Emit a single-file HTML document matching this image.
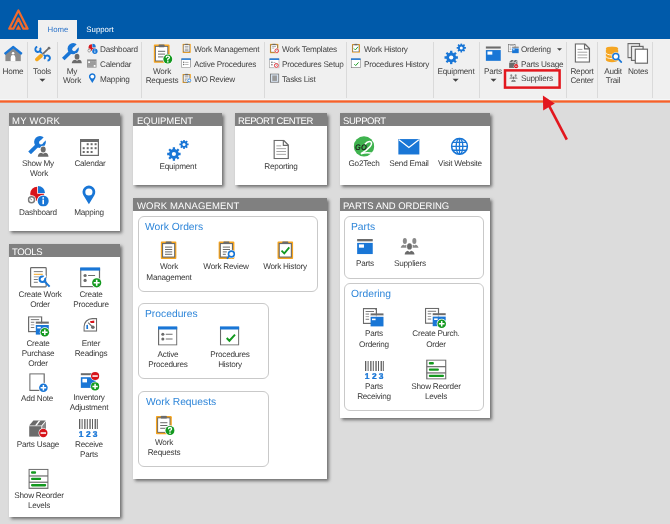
<!DOCTYPE html><html><head><meta charset="utf-8"><title>Go2Tech Home</title><style>
*{box-sizing:border-box}
html,body{margin:0;padding:0}
body{width:670px;height:524px;overflow:hidden;position:relative;background:#DCDCDC;font-family:"Liberation Sans",sans-serif;text-rendering:geometricPrecision}
.t{position:absolute;white-space:nowrap;line-height:10px;font-family:"Liberation Sans",sans-serif;will-change:transform}
.pn{position:absolute;background:#fff;box-shadow:2px 2px 3px rgba(0,0,0,0.5)}
.ph{position:absolute;left:0;top:0;right:0;height:13px;background:#808080}
.gb{position:absolute;border:1px solid #C9C9C9;border-radius:6px;background:#fff}
</style></head><body>
<div style="position:absolute;left:0;top:0;width:670px;height:39px;background:#005AAA"></div>
<div style="position:absolute;left:38px;top:20px;width:39px;height:19px;background:#F0F0F0"></div>
<div class="t" style="left:-2.2px;top:25px;width:120px;text-align:center;font-size:7.8px;line-height:10px;color:#2A72C8;">Home</div>
<div class="t" style="left:40.2px;top:25px;width:120px;text-align:center;font-size:7.8px;line-height:10px;color:#FFFFFF;">Support</div>
<div style="position:absolute;left:0;top:39px;width:670px;height:61px;background:#F0F0F0"></div>
<div style="position:absolute;left:27px;top:42px;width:1px;height:56px;background:#DADADA"></div>
<div style="position:absolute;left:57px;top:42px;width:1px;height:56px;background:#DADADA"></div>
<div style="position:absolute;left:141px;top:42px;width:1px;height:56px;background:#DADADA"></div>
<div style="position:absolute;left:264px;top:42px;width:1px;height:56px;background:#DADADA"></div>
<div style="position:absolute;left:346px;top:42px;width:1px;height:56px;background:#DADADA"></div>
<div style="position:absolute;left:433px;top:42px;width:1px;height:56px;background:#DADADA"></div>
<div style="position:absolute;left:479px;top:42px;width:1px;height:56px;background:#DADADA"></div>
<div style="position:absolute;left:566px;top:42px;width:1px;height:56px;background:#DADADA"></div>
<div style="position:absolute;left:597px;top:42px;width:1px;height:56px;background:#DADADA"></div>
<div style="position:absolute;left:652px;top:42px;width:1px;height:56px;background:#DADADA"></div>
<div style="position:absolute;left:0;top:99px;width:670px;height:1px;background:#F6F8F9"></div>
<div style="position:absolute;left:0;top:100px;width:670px;height:1px;background:#F4906A"></div>
<div style="position:absolute;left:0;top:101px;width:670px;height:1px;background:#F6602A"></div>
<div style="position:absolute;left:0;top:102px;width:670px;height:1px;background:#EE8A64"></div>
<div style="position:absolute;left:0;top:103px;width:670px;height:1px;background:#D6DDE0"></div>
<div class="t" style="left:-46.8px;top:67px;width:120px;text-align:center;font-size:8.2px;line-height:10px;color:#444;letter-spacing:-0.25px;">Home</div>
<div class="t" style="left:-17.6px;top:67px;width:120px;text-align:center;font-size:8.2px;line-height:10px;color:#444;letter-spacing:-0.25px;">Tools</div>
<div class="t" style="left:12.2px;top:67px;width:120px;text-align:center;font-size:8.2px;line-height:10px;color:#444;letter-spacing:-0.25px;">My</div>
<div class="t" style="left:12.1px;top:76px;width:120px;text-align:center;font-size:8.2px;line-height:10px;color:#444;letter-spacing:-0.25px;">Work</div>
<div class="t" style="left:101.5px;top:67px;width:120px;text-align:center;font-size:8.2px;line-height:10px;color:#444;letter-spacing:-0.25px;">Work</div>
<div class="t" style="left:101.5px;top:76px;width:120px;text-align:center;font-size:8.2px;line-height:10px;color:#444;letter-spacing:-0.25px;">Requests</div>
<div class="t" style="left:396.0px;top:67px;width:120px;text-align:center;font-size:8.2px;line-height:10px;color:#444;letter-spacing:-0.25px;">Equipment</div>
<div class="t" style="left:433.2px;top:67px;width:120px;text-align:center;font-size:8.2px;line-height:10px;color:#444;letter-spacing:-0.25px;">Parts</div>
<div class="t" style="left:522.2px;top:67px;width:120px;text-align:center;font-size:8.2px;line-height:10px;color:#444;letter-spacing:-0.25px;">Report</div>
<div class="t" style="left:522.2px;top:76px;width:120px;text-align:center;font-size:8.2px;line-height:10px;color:#444;letter-spacing:-0.25px;">Center</div>
<div class="t" style="left:552.8px;top:67px;width:120px;text-align:center;font-size:8.2px;line-height:10px;color:#444;letter-spacing:-0.25px;">Audit</div>
<div class="t" style="left:553.0px;top:76px;width:120px;text-align:center;font-size:8.2px;line-height:10px;color:#444;letter-spacing:-0.25px;">Trail</div>
<div class="t" style="left:577.7px;top:67px;width:120px;text-align:center;font-size:8.2px;line-height:10px;color:#444;letter-spacing:-0.25px;">Notes</div>
<div class="t" style="left:99.9px;top:45px;font-size:8.2px;line-height:10px;color:#444;letter-spacing:-0.25px;">Dashboard</div>
<div class="t" style="left:99.8px;top:60px;font-size:8.2px;line-height:10px;color:#444;letter-spacing:-0.25px;">Calendar</div>
<div class="t" style="left:100.0px;top:75px;font-size:8.2px;line-height:10px;color:#444;letter-spacing:-0.25px;">Mapping</div>
<div class="t" style="left:194.1px;top:45px;font-size:8.2px;line-height:10px;color:#444;letter-spacing:-0.25px;">Work Management</div>
<div class="t" style="left:194.0px;top:60px;font-size:8.2px;line-height:10px;color:#444;letter-spacing:-0.25px;">Active Procedures</div>
<div class="t" style="left:194.0px;top:75px;font-size:8.2px;line-height:10px;color:#444;letter-spacing:-0.25px;">WO Review</div>
<div class="t" style="left:281.5px;top:45px;font-size:8.2px;line-height:10px;color:#444;letter-spacing:-0.25px;">Work Templates</div>
<div class="t" style="left:281.5px;top:60px;font-size:8.2px;line-height:10px;color:#444;letter-spacing:-0.25px;">Procedures Setup</div>
<div class="t" style="left:281.5px;top:75px;font-size:8.2px;line-height:10px;color:#444;letter-spacing:-0.25px;">Tasks List</div>
<div class="t" style="left:363.5px;top:45px;font-size:8.2px;line-height:10px;color:#444;letter-spacing:-0.25px;">Work History</div>
<div class="t" style="left:363.5px;top:60px;font-size:8.2px;line-height:10px;color:#444;letter-spacing:-0.25px;">Procedures History</div>
<div class="t" style="left:520.9px;top:45px;font-size:8.2px;line-height:10px;color:#444;letter-spacing:-0.25px;">Ordering</div>
<div class="t" style="left:521.0px;top:60px;font-size:8.2px;line-height:10px;color:#444;letter-spacing:-0.25px;">Parts Usage</div>
<div class="t" style="left:520.9px;top:74px;font-size:8.2px;line-height:10px;color:#444;letter-spacing:-0.25px;">Suppliers</div>
<div class="pn" style="left:9px;top:113px;width:111px;height:118px"><div class="ph"></div></div>
<div class="t" style="left:12.3px;top:116px;font-size:9.5px;line-height:12px;color:#FFFFFF;letter-spacing:0.27px;">MY WORK</div>
<div class="pn" style="left:9px;top:244px;width:111px;height:273px"><div class="ph"></div></div>
<div class="t" style="left:12.3px;top:247px;font-size:9.5px;line-height:12px;color:#FFFFFF;letter-spacing:-0.38px;">TOOLS</div>
<div class="pn" style="left:133px;top:113px;width:89px;height:72px"><div class="ph"></div></div>
<div class="t" style="left:137.3px;top:116px;font-size:9.5px;line-height:12px;color:#FFFFFF;letter-spacing:-0.05px;">EQUIPMENT</div>
<div class="pn" style="left:235px;top:113px;width:92px;height:72px"><div class="ph"></div></div>
<div class="t" style="left:238.3px;top:116px;font-size:9.5px;line-height:12px;color:#FFFFFF;letter-spacing:-0.47px;">REPORT CENTER</div>
<div class="pn" style="left:340px;top:113px;width:150px;height:72px"><div class="ph"></div></div>
<div class="t" style="left:343.3px;top:116px;font-size:9.5px;line-height:12px;color:#FFFFFF;letter-spacing:-0.45px;">SUPPORT</div>
<div class="pn" style="left:133px;top:198px;width:194px;height:281px"><div class="ph"></div></div>
<div class="t" style="left:137.3px;top:201px;font-size:9.5px;line-height:12px;color:#FFFFFF;letter-spacing:0.15px;">WORK MANAGEMENT</div>
<div class="pn" style="left:340px;top:198px;width:150px;height:220px"><div class="ph"></div></div>
<div class="t" style="left:343.3px;top:201px;font-size:9.5px;line-height:12px;color:#FFFFFF;letter-spacing:-0.035px;">PARTS AND ORDERING</div>
<div class="gb" style="left:138px;top:216px;width:180px;height:76px"></div>
<div class="gb" style="left:138px;top:303px;width:131px;height:76px"></div>
<div class="gb" style="left:138px;top:391px;width:131px;height:76px"></div>
<div class="gb" style="left:344px;top:216px;width:140px;height:63px"></div>
<div class="gb" style="left:344px;top:283px;width:140px;height:128px"></div>
<div class="t" style="left:145.4px;top:222px;font-size:10.3px;line-height:12px;color:#2F86D9;">Work Orders</div>
<div class="t" style="left:144.8px;top:309px;font-size:10.3px;line-height:12px;color:#2F86D9;">Procedures</div>
<div class="t" style="left:145.5px;top:397px;font-size:10.3px;line-height:12px;color:#2F86D9;">Work Requests</div>
<div class="t" style="left:351.3px;top:222px;font-size:10.3px;line-height:12px;color:#2F86D9;">Parts</div>
<div class="t" style="left:351.2px;top:289px;font-size:10.3px;line-height:12px;color:#2F86D9;">Ordering</div>
<div class="t" style="left:-22.0px;top:159px;width:120px;text-align:center;font-size:8.2px;line-height:10px;color:#3A3A3A;letter-spacing:-0.25px;">Show My</div>
<div class="t" style="left:-21.5px;top:169px;width:120px;text-align:center;font-size:8.2px;line-height:10px;color:#3A3A3A;letter-spacing:-0.25px;">Work</div>
<div class="t" style="left:30.0px;top:159px;width:120px;text-align:center;font-size:8.2px;line-height:10px;color:#3A3A3A;letter-spacing:-0.25px;">Calendar</div>
<div class="t" style="left:-22.0px;top:208px;width:120px;text-align:center;font-size:8.2px;line-height:10px;color:#3A3A3A;letter-spacing:-0.25px;">Dashboard</div>
<div class="t" style="left:28.9px;top:208px;width:120px;text-align:center;font-size:8.2px;line-height:10px;color:#3A3A3A;letter-spacing:-0.25px;">Mapping</div>
<div class="t" style="left:-19.6px;top:290px;width:120px;text-align:center;font-size:8.2px;line-height:10px;color:#3A3A3A;letter-spacing:-0.25px;">Create Work</div>
<div class="t" style="left:-19.6px;top:300px;width:120px;text-align:center;font-size:8.2px;line-height:10px;color:#3A3A3A;letter-spacing:-0.25px;">Order</div>
<div class="t" style="left:30.9px;top:290px;width:120px;text-align:center;font-size:8.2px;line-height:10px;color:#3A3A3A;letter-spacing:-0.25px;">Create</div>
<div class="t" style="left:30.9px;top:300px;width:120px;text-align:center;font-size:8.2px;line-height:10px;color:#3A3A3A;letter-spacing:-0.25px;">Procedure</div>
<div class="t" style="left:-22.0px;top:339px;width:120px;text-align:center;font-size:8.2px;line-height:10px;color:#3A3A3A;letter-spacing:-0.25px;">Create</div>
<div class="t" style="left:-22.0px;top:349px;width:120px;text-align:center;font-size:8.2px;line-height:10px;color:#3A3A3A;letter-spacing:-0.25px;">Purchase</div>
<div class="t" style="left:-22.0px;top:359px;width:120px;text-align:center;font-size:8.2px;line-height:10px;color:#3A3A3A;letter-spacing:-0.25px;">Order</div>
<div class="t" style="left:30.8px;top:339px;width:120px;text-align:center;font-size:8.2px;line-height:10px;color:#3A3A3A;letter-spacing:-0.25px;">Enter</div>
<div class="t" style="left:30.8px;top:349px;width:120px;text-align:center;font-size:8.2px;line-height:10px;color:#3A3A3A;letter-spacing:-0.25px;">Readings</div>
<div class="t" style="left:-22.6px;top:394px;width:120px;text-align:center;font-size:8.2px;line-height:10px;color:#3A3A3A;letter-spacing:-0.25px;">Add Note</div>
<div class="t" style="left:28.6px;top:393px;width:120px;text-align:center;font-size:8.2px;line-height:10px;color:#3A3A3A;letter-spacing:-0.25px;">Inventory</div>
<div class="t" style="left:28.6px;top:403px;width:120px;text-align:center;font-size:8.2px;line-height:10px;color:#3A3A3A;letter-spacing:-0.25px;">Adjustment</div>
<div class="t" style="left:-22.0px;top:440px;width:120px;text-align:center;font-size:8.2px;line-height:10px;color:#3A3A3A;letter-spacing:-0.25px;">Parts Usage</div>
<div class="t" style="left:28.5px;top:440px;width:120px;text-align:center;font-size:8.2px;line-height:10px;color:#3A3A3A;letter-spacing:-0.25px;">Receive</div>
<div class="t" style="left:28.5px;top:450px;width:120px;text-align:center;font-size:8.2px;line-height:10px;color:#3A3A3A;letter-spacing:-0.25px;">Parts</div>
<div class="t" style="left:-21.5px;top:491px;width:120px;text-align:center;font-size:8.2px;line-height:10px;color:#3A3A3A;letter-spacing:-0.25px;">Show Reorder</div>
<div class="t" style="left:-21.5px;top:501px;width:120px;text-align:center;font-size:8.2px;line-height:10px;color:#3A3A3A;letter-spacing:-0.25px;">Levels</div>
<div class="t" style="left:118.4px;top:162px;width:120px;text-align:center;font-size:8.2px;line-height:10px;color:#3A3A3A;letter-spacing:-0.25px;">Equipment</div>
<div class="t" style="left:221.3px;top:162px;width:120px;text-align:center;font-size:8.2px;line-height:10px;color:#3A3A3A;letter-spacing:-0.25px;">Reporting</div>
<div class="t" style="left:304.1px;top:159px;width:120px;text-align:center;font-size:8.2px;line-height:10px;color:#3A3A3A;letter-spacing:-0.25px;">Go2Tech</div>
<div class="t" style="left:348.7px;top:159px;width:120px;text-align:center;font-size:8.2px;line-height:10px;color:#3A3A3A;letter-spacing:-0.25px;">Send Email</div>
<div class="t" style="left:399.8px;top:159px;width:120px;text-align:center;font-size:8.2px;line-height:10px;color:#3A3A3A;letter-spacing:-0.25px;">Visit Website</div>
<div class="t" style="left:108.5px;top:262px;width:120px;text-align:center;font-size:8.2px;line-height:10px;color:#3A3A3A;letter-spacing:-0.25px;">Work</div>
<div class="t" style="left:108.5px;top:273px;width:120px;text-align:center;font-size:8.2px;line-height:10px;color:#3A3A3A;letter-spacing:-0.25px;">Management</div>
<div class="t" style="left:166.3px;top:262px;width:120px;text-align:center;font-size:8.2px;line-height:10px;color:#3A3A3A;letter-spacing:-0.25px;">Work Review</div>
<div class="t" style="left:225.3px;top:262px;width:120px;text-align:center;font-size:8.2px;line-height:10px;color:#3A3A3A;letter-spacing:-0.25px;">Work History</div>
<div class="t" style="left:107.6px;top:350px;width:120px;text-align:center;font-size:8.2px;line-height:10px;color:#3A3A3A;letter-spacing:-0.25px;">Active</div>
<div class="t" style="left:107.6px;top:360px;width:120px;text-align:center;font-size:8.2px;line-height:10px;color:#3A3A3A;letter-spacing:-0.25px;">Procedures</div>
<div class="t" style="left:169.9px;top:350px;width:120px;text-align:center;font-size:8.2px;line-height:10px;color:#3A3A3A;letter-spacing:-0.25px;">Procedures</div>
<div class="t" style="left:169.9px;top:360px;width:120px;text-align:center;font-size:8.2px;line-height:10px;color:#3A3A3A;letter-spacing:-0.25px;">History</div>
<div class="t" style="left:103.8px;top:438px;width:120px;text-align:center;font-size:8.2px;line-height:10px;color:#3A3A3A;letter-spacing:-0.25px;">Work</div>
<div class="t" style="left:103.8px;top:448px;width:120px;text-align:center;font-size:8.2px;line-height:10px;color:#3A3A3A;letter-spacing:-0.25px;">Requests</div>
<div class="t" style="left:305.1px;top:259px;width:120px;text-align:center;font-size:8.2px;line-height:10px;color:#3A3A3A;letter-spacing:-0.25px;">Parts</div>
<div class="t" style="left:349.9px;top:259px;width:120px;text-align:center;font-size:8.2px;line-height:10px;color:#3A3A3A;letter-spacing:-0.25px;">Suppliers</div>
<div class="t" style="left:313.6px;top:329px;width:120px;text-align:center;font-size:8.2px;line-height:10px;color:#3A3A3A;letter-spacing:-0.25px;">Parts</div>
<div class="t" style="left:313.6px;top:340px;width:120px;text-align:center;font-size:8.2px;line-height:10px;color:#3A3A3A;letter-spacing:-0.25px;">Ordering</div>
<div class="t" style="left:376.3px;top:329px;width:120px;text-align:center;font-size:8.2px;line-height:10px;color:#3A3A3A;letter-spacing:-0.25px;">Create Purch.</div>
<div class="t" style="left:376.3px;top:340px;width:120px;text-align:center;font-size:8.2px;line-height:10px;color:#3A3A3A;letter-spacing:-0.25px;">Order</div>
<div class="t" style="left:314.2px;top:382px;width:120px;text-align:center;font-size:8.2px;line-height:10px;color:#3A3A3A;letter-spacing:-0.25px;">Parts</div>
<div class="t" style="left:314.2px;top:392px;width:120px;text-align:center;font-size:8.2px;line-height:10px;color:#3A3A3A;letter-spacing:-0.25px;">Receiving</div>
<div class="t" style="left:376.4px;top:382px;width:120px;text-align:center;font-size:8.2px;line-height:10px;color:#3A3A3A;letter-spacing:-0.25px;">Show Reorder</div>
<div class="t" style="left:376.4px;top:392px;width:120px;text-align:center;font-size:8.2px;line-height:10px;color:#3A3A3A;letter-spacing:-0.25px;">Levels</div>
<svg style="position:absolute;left:0;top:0" width="670" height="524" viewBox="0 0 670 524"><defs>
<symbol id="clip" viewBox="0 0 16 18">
 <rect x="0" y="0.6" width="16" height="17.4" rx="1.2" fill="#F5A41F"/>
 <rect x="1.4" y="2" width="13.2" height="14.6" fill="#6B6B6B"/>
 <rect x="2.5" y="3.1" width="11" height="12.4" fill="#fff"/>
 <rect x="5" y="0.4" width="6" height="2.6" rx="0.6" fill="#6B6B6B"/>
 <rect x="4.4" y="5.6" width="7.2" height="1" fill="#6B6B6B"/>
 <rect x="4.4" y="8" width="7.2" height="1" fill="#6B6B6B"/>
 <rect x="4.4" y="10.4" width="7.2" height="1" fill="#6B6B6B"/>
 <rect x="4.4" y="12.8" width="7.2" height="1" fill="#6B6B6B"/>
</symbol>
<symbol id="clipcheck" viewBox="0 0 16 18">
 <rect x="0" y="0.6" width="16" height="17.4" rx="1.2" fill="#F5A41F"/>
 <rect x="1.4" y="2" width="13.2" height="14.6" fill="#6B6B6B"/>
 <rect x="2.5" y="3.1" width="11" height="12.4" fill="#fff"/>
 <rect x="5" y="0.4" width="6" height="2.6" rx="0.6" fill="#6B6B6B"/>
 <path d="M4.2 9.6 L7 12.4 L12 6.4" fill="none" stroke="#13991F" stroke-width="1.8"/>
</symbol>
<symbol id="clipreview" viewBox="0 0 18 19">
 <rect x="0" y="0.6" width="16" height="17.4" rx="1.2" fill="#F5A41F"/>
 <rect x="1.4" y="2" width="13.2" height="14.6" fill="#6B6B6B"/>
 <rect x="2.5" y="3.1" width="11" height="12.4" fill="#fff"/>
 <rect x="5" y="0.4" width="6" height="2.6" rx="0.6" fill="#6B6B6B"/>
 <rect x="4.4" y="5.6" width="7.2" height="1" fill="#6B6B6B"/>
 <rect x="4.4" y="8" width="7.2" height="1" fill="#6B6B6B"/>
 <rect x="4.4" y="10.4" width="4" height="1" fill="#6B6B6B"/>
 <rect x="4.4" y="12.8" width="3" height="1" fill="#6B6B6B"/>
 <circle cx="13" cy="13" r="4.2" fill="#fff"/>
 <circle cx="13" cy="13" r="2.9" fill="#fff" stroke="#1976D6" stroke-width="1.6"/>
 <path d="M11 15 L8.6 17.8" stroke="#1976D6" stroke-width="1.6"/>
</symbol>
<symbol id="cliphelp" viewBox="0 0 19 20">
 <rect x="0" y="0.6" width="16" height="18.2" rx="1.2" fill="#F5A41F"/>
 <rect x="1.4" y="2" width="13.2" height="15.4" fill="#6B6B6B"/>
 <rect x="2.3" y="2.9" width="11.4" height="13.6" fill="#fff"/>
 <rect x="5" y="0.4" width="6" height="2.8" rx="0.6" fill="#6B6B6B"/>
 <rect x="4.4" y="6.8" width="7.2" height="1" fill="#6B6B6B"/>
 <rect x="4.4" y="9.6" width="7.2" height="1" fill="#6B6B6B"/>
 <rect x="4.4" y="12.4" width="7.2" height="1" fill="#6B6B6B"/>
 <circle cx="14.2" cy="15.1" r="5.2" fill="#fff"/>
 <circle cx="14.2" cy="15.1" r="4.5" fill="#13991F"/>
 <path d="M12.6 13.8 Q12.6 12.1 14.2 12.1 Q15.8 12.1 15.8 13.6 Q15.8 14.5 14.2 15.1 L14.2 16.4" fill="none" stroke="#fff" stroke-width="1.3"/>
 <rect x="13.5" y="17.1" width="1.4" height="1.4" fill="#fff"/>
</symbol>
<symbol id="cliptime" viewBox="0 0 18 19">
 <rect x="0" y="0.6" width="16" height="17.4" rx="1.2" fill="#F5A41F"/>
 <rect x="1.4" y="2" width="13.2" height="14.6" fill="#6B6B6B"/>
 <rect x="2.5" y="3.1" width="11" height="12.4" fill="#fff"/>
 <rect x="5" y="0.4" width="6" height="2.6" rx="0.6" fill="#6B6B6B"/>
 <rect x="4.4" y="5.6" width="7.2" height="1" fill="#6B6B6B"/>
 <rect x="4.4" y="8" width="4" height="1" fill="#6B6B6B"/>
 <circle cx="13" cy="13.5" r="4.6" fill="#fff"/>
 <circle cx="13" cy="13.5" r="3.4" fill="#fff" stroke="#D7141B" stroke-width="1.5"/>
 <path d="M13 11.6 V13.6 H14.6" fill="none" stroke="#6B6B6B" stroke-width="0.9"/>
</symbol>
<symbol id="win" viewBox="0 0 20 20">
 <rect x="0.6" y="1.5" width="18.8" height="17.9" fill="#fff" stroke="#6B6B6B" stroke-width="1.2"/>
 <rect x="0" y="0" width="20" height="3.4" fill="#1976D6"/>
 <circle cx="5" cy="8.3" r="1.6" fill="#6B6B6B"/>
 <circle cx="5" cy="13.2" r="1.6" fill="#6B6B6B"/>
 <rect x="8" y="7.8" width="7" height="1" fill="#6B6B6B"/>
 <rect x="8" y="12.7" width="7" height="1" fill="#6B6B6B"/>
</symbol>
<symbol id="wincheck" viewBox="0 0 20 20">
 <rect x="0.6" y="1.5" width="18.8" height="17.9" fill="#fff" stroke="#6B6B6B" stroke-width="1.2"/>
 <rect x="0" y="0" width="20" height="3.4" fill="#1976D6"/>
 <path d="M7 12.2 L9.8 15 L15.6 8.6" fill="none" stroke="#13991F" stroke-width="2"/>
</symbol>
<symbol id="winplus" viewBox="0 0 22 21">
 <rect x="0.6" y="1.5" width="18.8" height="17.9" fill="#fff" stroke="#6B6B6B" stroke-width="1.2"/>
 <rect x="0" y="0" width="20" height="3.4" fill="#1976D6"/>
 <circle cx="5" cy="8.3" r="1.6" fill="#6B6B6B"/>
 <circle cx="5" cy="13.2" r="1.6" fill="#6B6B6B"/>
 <rect x="8" y="7.8" width="7" height="1" fill="#6B6B6B"/>
 <circle cx="16.6" cy="15.6" r="5.4" fill="#fff"/>
 <circle cx="16.6" cy="15.6" r="4.6" fill="#13991F"/>
 <path d="M16.6 12.6 V18.6 M13.6 15.6 H19.6" stroke="#fff" stroke-width="1.6"/>
</symbol>
<symbol id="wintime" viewBox="0 0 20 20">
 <rect x="0.6" y="1.5" width="18.8" height="17.9" fill="#fff" stroke="#6B6B6B" stroke-width="1.2"/>
 <rect x="0" y="0" width="20" height="3.4" fill="#1976D6"/>
 <circle cx="5" cy="8.3" r="1.6" fill="#6B6B6B"/>
 <rect x="8" y="7.8" width="4" height="1" fill="#6B6B6B"/>
 <circle cx="5" cy="13.2" r="1.6" fill="#6B6B6B"/>
 <circle cx="14" cy="14.5" r="5.2" fill="#fff"/>
 <circle cx="14" cy="14.5" r="3.9" fill="#fff" stroke="#D7141B" stroke-width="1.7"/>
 <path d="M14 12.4 V14.6 H15.8" fill="none" stroke="#6B6B6B" stroke-width="1"/>
</symbol>
<symbol id="gears" viewBox="0 0 23 21">
 <g transform="translate(7.6,13.9)"><circle r="4.9" fill="#1976D6"/>
 <g stroke="#1976D6" stroke-width="2.3"><path d="M0 -6.7 V6.7 M-6.7 0 H6.7 M-4.74 -4.74 L4.74 4.74 M-4.74 4.74 L4.74 -4.74"/></g>
 <circle r="2.1" fill="#fff"/></g>
 <g transform="translate(17.7,4.3)"><circle r="3.3" fill="#1976D6"/>
 <g stroke="#1976D6" stroke-width="1.6"><path d="M0 -4.6 V4.6 M-4.6 0 H4.6 M-3.25 -3.25 L3.25 3.25 M-3.25 3.25 L3.25 -3.25"/></g>
 <circle r="1.5" fill="#fff"/></g>
</symbol>
<symbol id="doc" viewBox="0 0 16 20">
 <path d="M0.7 0.7 H10.6 L15.3 5.4 V19.3 H0.7 Z" fill="#fff" stroke="#6B6B6B" stroke-width="1.3"/>
 <path d="M10.2 0.7 V5.8 H15.3" fill="none" stroke="#6B6B6B" stroke-width="1.2"/>
 <rect x="3" y="5.8" width="5" height="0.9" fill="#999"/>
 <rect x="3" y="8.7" width="10" height="0.9" fill="#999"/>
 <rect x="3" y="11.6" width="10" height="0.9" fill="#999"/>
 <rect x="3" y="14.5" width="10" height="0.9" fill="#999"/>
</symbol>
<symbol id="parts" viewBox="0 0 16 16">
 <rect x="0" y="0" width="16" height="2.4" fill="#6B6B6B"/>
 <rect x="0" y="4" width="16" height="11.5" fill="#1976D6"/>
 <rect x="1.8" y="5.5" width="5.2" height="3.4" fill="#fff"/>
</symbol>
<symbol id="persons" viewBox="0 0 20 18">
 <g fill="#8A8A8A">
  <ellipse cx="5.1" cy="3.5" rx="2.1" ry="3"/>
  <path d="M0.8 10.6 Q1.2 7.6 4 7.3 L5.1 8.1 L6.2 7.3 Q8 7.5 8.4 9 L7.4 10.6 Z"/>
  <ellipse cx="14.9" cy="3.5" rx="2.1" ry="3"/>
  <path d="M19.2 10.6 Q18.8 7.6 16 7.3 L14.9 8.1 L13.8 7.3 Q12 7.5 11.6 9 L12.6 10.6 Z"/>
 </g>
 <ellipse cx="9.9" cy="9.1" rx="3.3" ry="4.1" fill="#fff"/>
 <g fill="#6B6B6B">
  <ellipse cx="9.9" cy="9.1" rx="2.5" ry="3.3"/>
  <path d="M4.9 17.5 Q5.2 14 8.2 13.6 L9.9 14.8 L11.6 13.6 Q14.8 14 15.1 17.5 Z"/>
 </g>
</symbol>
<symbol id="ordering" viewBox="0 0 21 19">
 <rect x="0.6" y="0.6" width="13" height="14.8" fill="#fff" stroke="#6B6B6B" stroke-width="1.2"/>
 <path d="M12.2 0.6 L13.6 2" stroke="#6B6B6B" stroke-width="1"/>
 <rect x="2.8" y="3" width="8.4" height="0.9" fill="#6B6B6B"/>
 <rect x="2.8" y="5.6" width="3.5" height="0.9" fill="#6B6B6B"/>
 <rect x="2.8" y="8.2" width="3.5" height="0.9" fill="#999"/>
 <rect x="2.8" y="10.8" width="3.5" height="0.9" fill="#6B6B6B"/>
 <rect x="7.8" y="5.4" width="13" height="2.2" fill="#6B6B6B"/>
 <rect x="7.8" y="7.6" width="13" height="1.2" fill="#fff"/>
 <rect x="7.8" y="8.8" width="13" height="9.6" fill="#1976D6"/>
 <rect x="9.2" y="10.6" width="3.6" height="1.6" fill="#fff"/>
</symbol>
<symbol id="orderplus" viewBox="0 0 22 21">
 <rect x="0.6" y="0.6" width="13" height="14.8" fill="#fff" stroke="#6B6B6B" stroke-width="1.2"/>
 <rect x="2.8" y="3" width="8.4" height="0.9" fill="#6B6B6B"/>
 <rect x="2.8" y="5.6" width="3.5" height="0.9" fill="#6B6B6B"/>
 <rect x="2.8" y="8.2" width="3.5" height="0.9" fill="#999"/>
 <rect x="2.8" y="10.8" width="3.5" height="0.9" fill="#6B6B6B"/>
 <rect x="7.8" y="5.4" width="13" height="2.2" fill="#6B6B6B"/>
 <rect x="7.8" y="7.6" width="13" height="1.2" fill="#fff"/>
 <rect x="7.8" y="8.8" width="13" height="9.6" fill="#1976D6"/>
 <rect x="9.2" y="10.6" width="3.6" height="1.6" fill="#fff"/>
 <circle cx="16.8" cy="16" r="5" fill="#fff"/>
 <circle cx="16.8" cy="16" r="4.3" fill="#13991F"/>
 <path d="M16.8 13.2 V18.8 M14 16 H19.6" stroke="#fff" stroke-width="1.5"/>
</symbol>
<symbol id="barcode" viewBox="0 0 19 18">
 <g fill="#5E5E5E"><rect x="0.0" y="0" width="1.3" height="10"/><rect x="2.6" y="0" width="1" height="10"/><rect x="5.2" y="0" width="1.3" height="10"/><rect x="7.8" y="0" width="1" height="10"/><rect x="10.4" y="0" width="1.3" height="10"/><rect x="13.0" y="0" width="1" height="10"/><rect x="15.6" y="0" width="1.3" height="10"/><rect x="17.8" y="0" width="1" height="10"/></g>
 <g font-family="Liberation Sans" font-weight="bold" font-size="8.4" fill="#1976D6" stroke="#1976D6" stroke-width="0.35" text-anchor="middle"><text x="2" y="17.8">1</text><text x="9.3" y="17.8">2</text><text x="16.2" y="17.8">3</text></g>
</symbol>
<symbol id="levels" viewBox="0 0 20 20">
 <rect x="0.6" y="0.6" width="18.8" height="18.8" fill="#fff" stroke="#6B6B6B" stroke-width="1.2"/>
 <rect x="0.6" y="6.6" width="18.8" height="1.2" fill="#6B6B6B"/>
 <rect x="0.6" y="12.8" width="18.8" height="1.2" fill="#6B6B6B"/>
 <rect x="2.6" y="2.6" width="5" height="2.4" rx="1" fill="#13991F"/>
 <rect x="2.6" y="8.9" width="10" height="2.4" rx="1" fill="#13991F"/>
 <rect x="2.6" y="15.1" width="15" height="2.4" rx="1" fill="#13991F"/>
</symbol>
<symbol id="calendar" viewBox="0 0 19 17">
 <rect x="0.6" y="0.6" width="17.8" height="15.8" fill="#fff" stroke="#6B6B6B" stroke-width="1.2"/>
 <rect x="0" y="0" width="19" height="3" fill="#6B6B6B"/>
 <g fill="#6B6B6B">
 <rect x="6.7" y="4.2" width="2" height="2"/><rect x="10.6" y="4.2" width="2" height="2"/><rect x="14.6" y="4.2" width="2" height="2"/>
 <rect x="2.7" y="8.2" width="2" height="2"/><rect x="6.7" y="8.2" width="2" height="2"/><rect x="10.6" y="8.2" width="2" height="2"/><rect x="14.6" y="8.2" width="2" height="2"/>
 <rect x="2.7" y="12" width="2" height="2"/><rect x="6.7" y="12" width="2" height="2"/><rect x="10.6" y="12" width="2" height="2"/>
 </g>
</symbol>
<symbol id="pin" viewBox="0 0 14 20">
 <path d="M7 19.8 L1.5 10.8 A6.6 6.6 0 1 1 12.5 10.8 Z" fill="#1976D6"/>
 <circle cx="7" cy="7.1" r="3.7" fill="#fff"/>
</symbol>
<symbol id="dashboard" viewBox="0 0 22 22">
 <path d="M9.7 9.1 V2.1 A7 7 0 1 0 16.7 9.1 Z" fill="#D7141B"/>
 <path d="M10.5 8.3 V1.3 A7 7 0 0 1 17.5 8.3 Z" fill="#1976D6"/>
 <circle cx="4" cy="15.1" r="4.5" fill="#fff"/>
 <circle cx="4" cy="15.1" r="3" fill="#fff" stroke="#7A7A7A" stroke-width="1.5"/>
 <path d="M2.6 14 L4.4 15.4" stroke="#7A7A7A" stroke-width="1"/>
 <circle cx="15.7" cy="16.4" r="6.3" fill="#fff"/>
 <circle cx="15.7" cy="16.4" r="5.5" fill="#1976D6"/>
 <rect x="14.9" y="15" width="1.6" height="4.6" fill="#fff"/>
 <circle cx="15.7" cy="13.3" r="0.95" fill="#fff"/>
</symbol>
<symbol id="wrenchuser" viewBox="0 0 22 22">
 <defs><mask id="wm"><rect x="-5" y="-5" width="40" height="40" fill="#fff"/><path d="M14 7 L20 1" stroke="#000" stroke-width="3.6"/><circle cx="14" cy="7" r="2" fill="#000"/></mask></defs>
 <g mask="url(#wm)">
 <circle cx="13" cy="6.4" r="5.9" fill="#1976D6"/>
 <path d="M11 9 L2.6 17.2" stroke="#1976D6" stroke-width="3.8"/>
 </g>
 <ellipse cx="16.2" cy="14" rx="3.3" ry="3.8" fill="#fff"/>
 <ellipse cx="16.2" cy="14" rx="2.5" ry="3" fill="#6B6B6B"/>
 <path d="M10.8 21.2 Q11.2 17.4 14.4 17.2 L16.2 18.2 L18 17.2 Q21.2 17.4 21.5 21.2 Z" fill="#6B6B6B"/>
</symbol>
<symbol id="cwo" viewBox="0 0 21 21">
 <rect x="0.6" y="0.6" width="15.6" height="19.2" rx="0.8" fill="#fff" stroke="#6B6B6B" stroke-width="1.2"/>
 <rect x="3.8" y="4.2" width="9" height="0.9" fill="#6B6B6B"/>
 <rect x="3.8" y="6.8" width="9" height="1" fill="#F5A41F"/>
 <rect x="3.8" y="9.4" width="6" height="0.9" fill="#999"/>
 <rect x="3.8" y="12" width="4" height="0.9" fill="#6B6B6B"/>
 <rect x="3.8" y="14.8" width="4" height="0.9" fill="#6B6B6B"/>
 <circle cx="12.6" cy="12.6" r="4.4" fill="#fff"/>
 <circle cx="12.4" cy="12.2" r="2.8" fill="none" stroke="#1976D6" stroke-width="2"/>
 <path d="M13.8 13.6 L19.6 19.6" stroke="#1976D6" stroke-width="2"/>
 <path d="M12.4 12.2 L16 8.6" stroke="#fff" stroke-width="1.8"/>
</symbol>
<symbol id="gauge" viewBox="0 0 14 14">
 <path d="M0.6 13.4 V9 A8.4 8.4 0 0 1 9 0.6 H13.4 V13.4 Z" fill="#fff" stroke="#6B6B6B" stroke-width="1.2"/>
 <path d="M6.6 3.4 L11 2.6 V5 L7.4 5 Z" fill="#D7141B"/>
 <path d="M3 7 L4.6 6.8 L4.8 11.2 L3 11.2 Z" fill="#1976D6"/>
 <path d="M4.8 4.8 L9.6 9.4" stroke="#6B6B6B" stroke-width="1.1"/>
 <circle cx="9.6" cy="9.4" r="1.8" fill="#6B6B6B"/>
</symbol>
<symbol id="addnote" viewBox="0 0 20 20">
 <rect x="0.6" y="0.6" width="14.4" height="16.6" fill="#fff" stroke="#6B6B6B" stroke-width="1.2"/>
 <circle cx="14.2" cy="14.6" r="5" fill="#fff"/>
 <circle cx="14.2" cy="14.6" r="4.3" fill="#1976D6"/>
 <path d="M14.2 11.8 V17.4 M11.4 14.6 H17" stroke="#fff" stroke-width="1.5"/>
</symbol>
<symbol id="invadj" viewBox="0 0 20 20">
 <rect x="0" y="1.8" width="15" height="2" fill="#6B6B6B"/>
 <rect x="0" y="5.8" width="15" height="10.7" fill="#1976D6"/>
 <rect x="1.8" y="7.4" width="4.6" height="3.6" fill="#fff"/>
 <circle cx="14.5" cy="4.6" r="4.7" fill="#fff"/>
 <circle cx="14.5" cy="4.6" r="4.1" fill="#D7141B"/>
 <rect x="11.8" y="3.9" width="5.4" height="1.5" fill="#fff"/>
 <circle cx="14.5" cy="15" r="4.7" fill="#fff"/>
 <circle cx="14.5" cy="15" r="4.1" fill="#13991F"/>
 <path d="M14.5 12.3 V17.7 M11.8 15 H17.2" stroke="#fff" stroke-width="1.5"/>
</symbol>
<symbol id="partsusage" viewBox="0 0 20 19">
 <path d="M0.8 6 L5 1 H17.2 L13 6 Z" fill="#6B6B6B"/>
 <path d="M6.6 6 L10.4 1 H12.2 L8.4 6 Z" fill="#fff"/>
 <rect x="0.8" y="6.8" width="12.2" height="10.4" fill="#6B6B6B"/>
 <path d="M13.8 6.6 L17.6 1.8 V12 L13.8 16 Z" fill="#888"/>
 <circle cx="14.9" cy="13.6" r="4.8" fill="#fff"/>
 <circle cx="14.9" cy="13.6" r="4.2" fill="#D7141B"/>
 <rect x="12.2" y="12.9" width="5.4" height="1.5" fill="#fff"/>
</symbol>
<symbol id="envelope" viewBox="0 0 22 16">
 <rect x="0" y="0" width="22" height="16" fill="#1976D6"/>
 <path d="M0.8 0.8 L11 8.6 L21.2 0.8" fill="none" stroke="#fff" stroke-width="1.3"/>
</symbol>
<symbol id="globe" viewBox="0 0 18 18">
 <circle cx="9" cy="9" r="8" fill="none" stroke="#1976D6" stroke-width="1.6"/>
 <path d="M1 9 H17 M2.4 5 H15.6 M2.4 13 H15.6" stroke="#1976D6" stroke-width="1.3"/>
 <ellipse cx="9" cy="9" rx="3.4" ry="8" fill="none" stroke="#1976D6" stroke-width="1.3"/>
 <path d="M9 1 V17" stroke="#1976D6" stroke-width="1.3"/>
</symbol>
<symbol id="go2" viewBox="0 0 21 21">
 <circle cx="10.5" cy="10.5" r="10.2" fill="#3FB34F"/>
 <text x="1.6" y="14.5" font-family="Liberation Sans" font-weight="bold" font-style="italic" font-size="8.2" textLength="11.6" lengthAdjust="spacingAndGlyphs" fill="#1E1E1E">GO</text>
 <path d="M11.4 8.4 Q14.4 4.6 17.2 5.8 Q19.2 7.2 16.6 10.6 Q13.6 14.4 7.4 17.8 Q13 16.2 19.2 17.4" fill="none" stroke="#fff" stroke-width="1.5"/>
</symbol>
<symbol id="home" viewBox="0 0 19 16">
 <path d="M1.4 8.4 V15.6 H16.8 V8.4 L9.2 2.4 Z" fill="#8A8A8A"/>
 <path d="M0.6 8.4 L9.2 1.4 L17.8 8.4" fill="none" stroke="#1976D6" stroke-width="2.3"/>
 <path d="M6.7 15.8 V11.8 A2.35 2.35 0 0 1 11.4 11.8 V15.8 Z" fill="#fff"/>
 <circle cx="9.1" cy="7.6" r="1.3" fill="#fff"/>
</symbol>
<symbol id="tools" viewBox="0 0 17 16">
 <path d="M5.83 2.01 A2.6 2.6 0 1 1 3.03 0.99" fill="none" stroke="#1976D6" stroke-width="2"/>
 <path d="M10.74 13.40 A2.6 2.6 0 1 1 13.33 14.89" fill="none" stroke="#1976D6" stroke-width="2"/>
 <path d="M5.4 5.3 L11.3 10.5" stroke="#1976D6" stroke-width="1.9"/>
 <path d="M15.2 1.8 L8.2 8.6" stroke="#F0F0F0" stroke-width="2.8"/>
 <path d="M15.2 1.8 L8.2 8.6" stroke="#6B6B6B" stroke-width="1.7"/>
 <path d="M14.1 1.3 L15.9 3.1" stroke="#6B6B6B" stroke-width="2"/>
 <path d="M6.6 10.2 L2.8 13.6" stroke="#F5A81C" stroke-width="3.8" stroke-linecap="round"/><path d="M7.6 9.2 L6 10.8" stroke="#F5A81C" stroke-width="2.4"/>
</symbol>
<symbol id="wrenchuser2" viewBox="0 0 22 22">
 <defs><mask id="wm2"><rect x="-5" y="-5" width="40" height="40" fill="#fff"/><path d="M14 7 L20 1" stroke="#000" stroke-width="3.6"/><circle cx="14" cy="7" r="2" fill="#000"/></mask></defs>
 <g mask="url(#wm2)">
 <circle cx="13" cy="6.4" r="5.9" fill="#1976D6"/>
 <path d="M11 9 L2.6 17.2" stroke="#1976D6" stroke-width="3.8"/>
 </g>
 <ellipse cx="17" cy="14.8" rx="3.3" ry="3.8" fill="#F0F0F0"/>
 <ellipse cx="17" cy="14.8" rx="2.5" ry="3" fill="#6B6B6B"/>
 <path d="M11.4 21.9 Q11.8 18.2 15.2 18 L17 19 L18.8 18 Q22.2 18.2 22.2 21.9 Z" fill="#6B6B6B"/>
</symbol>
<symbol id="audit" viewBox="0 0 17 17">
 <ellipse cx="6.6" cy="2.6" rx="6.2" ry="2.4" fill="#F5A623"/>
 <path d="M0.4 3.6 V13.6 A6.2 2.4 0 0 0 12.8 13.6 V3.6" fill="#F5A623"/>
 <path d="M0.4 6.4 A6.2 2.4 0 0 0 12.8 6.4 M0.4 10 A6.2 2.4 0 0 0 12.8 10" fill="none" stroke="#fff" stroke-width="0.9"/>
 <circle cx="10.4" cy="10.2" r="4.2" fill="#F0F0F0"/>
 <circle cx="10.4" cy="10.2" r="3" fill="#fff" stroke="#1976D6" stroke-width="1.5"/>
 <path d="M12.6 12.4 L16.4 16.4" stroke="#1976D6" stroke-width="1.7"/>
</symbol>
<symbol id="notes" viewBox="0 0 21 21">
 <rect x="0.6" y="0.6" width="11.6" height="14" fill="#F0F0F0" stroke="#6B6B6B" stroke-width="1.2"/>
 <rect x="4.2" y="3.4" width="11.6" height="14" fill="#F0F0F0" stroke="#6B6B6B" stroke-width="1.2"/>
 <rect x="8" y="6.2" width="12.2" height="14" fill="#fff" stroke="#6B6B6B" stroke-width="1.2"/>
</symbol>
<symbol id="taskslist" viewBox="0 0 10 10">
 <rect x="0.5" y="0.5" width="9" height="9" fill="#D8E4F2" stroke="#6B6B6B" stroke-width="1"/>
 <rect x="2.5" y="2.2" width="5" height="5.8" fill="#9A9A9A"/>
</symbol>
<symbol id="calsmall" viewBox="0 0 10 9">
 <rect x="0" y="0" width="10" height="9" fill="#8C8C8C"/>
 <rect x="0.7" y="1.8" width="8.6" height="6.5" fill="#A8A8A8"/>
 <path d="M3.1 1.8 V8.3 M5.2 1.8 V8.3 M7.3 1.8 V8.3 M0.7 4 H9.3 M0.7 6.1 H9.3" stroke="#8E8E8E" stroke-width="0.5"/>
 <rect x="1.2" y="2.2" width="1.8" height="1.8" fill="#fff"/>
 <rect x="7" y="6.1" width="1.8" height="1.8" fill="#fff"/>
</symbol>
<symbol id="logo" viewBox="0 0 22 22">
 <path d="M10.9 1.8 L1.7 20.1 H5.9 L10.9 9.9 L15.9 20.1 H20.1 Z" fill="none" stroke="#F26A2B" stroke-width="2.2" stroke-linejoin="round"/>
 <path d="M8.2 21.2 L10.9 16.2 L13.6 21.2 Z" fill="#F26A2B"/>
</symbol>
</defs><use href="#logo" x="7.5" y="8.6" width="22" height="22"/><use href="#home" x="4" y="45.6" width="19" height="16"/><use href="#tools" x="34.2" y="45.8" width="17" height="16"/><use href="#wrenchuser2" x="60.8" y="42.6" width="21" height="21"/><use href="#cliphelp" x="153.6" y="44" width="19" height="20"/><use href="#gears" x="443.6" y="43.6" width="23" height="21"/><use href="#parts" x="485.5" y="46.3" width="15.5" height="15"/><use href="#doc" x="574.4" y="43.3" width="16" height="19.4"/><use href="#audit" x="605.4" y="46.2" width="17" height="17"/><use href="#notes" x="627.3" y="43" width="21" height="21"/><path d="M39.4 78.8 H45.4 L42.4 81.8 Z" fill="#444"/><path d="M452.6 78.8 H458.6 L455.6 81.8 Z" fill="#444"/><path d="M490.5 78.8 H496.5 L493.5 81.8 Z" fill="#444"/><path d="M557 48.2 H562 L559.5 50.8 Z" fill="#444"/><use href="#dashboard" x="87.2" y="43.2" width="10.8" height="10.8"/><use href="#calsmall" x="86.9" y="59.2" width="9.9" height="8.6"/><use href="#pin" x="88.8" y="73" width="7" height="10"/><use href="#clip" x="182.3" y="43.5" width="8.6" height="9.4"/><use href="#win" x="181.2" y="58.2" width="9.8" height="9.6"/><use href="#clipreview" x="182.3" y="73.6" width="9.6" height="10"/><use href="#cliptime" x="269.7" y="43.5" width="9.8" height="10.2"/><use href="#wintime" x="269.4" y="58.2" width="10" height="10"/><use href="#taskslist" x="269.9" y="73.4" width="9.4" height="9.4"/><use href="#clipcheck" x="351.8" y="43.6" width="8.2" height="9.2"/><use href="#wincheck" x="350.8" y="58.2" width="10" height="9.8"/><use href="#ordering" x="508" y="44" width="11" height="9.6"/><use href="#partsusage" x="508.3" y="59.4" width="10.8" height="9.4"/><use href="#persons" x="509" y="73.8" width="9" height="8.4"/><use href="#wrenchuser" x="27" y="135.6" width="22" height="22"/><use href="#calendar" x="80" y="139" width="19" height="17"/><use href="#dashboard" x="27.5" y="184.6" width="22" height="22"/><use href="#pin" x="82.1" y="185" width="13.6" height="19.6"/><use href="#cwo" x="30" y="267" width="21" height="21"/><use href="#winplus" x="80.1" y="267.2" width="22" height="21"/><use href="#orderplus" x="28" y="316.2" width="22" height="21"/><use href="#gauge" x="83.3" y="318" width="14" height="13.8"/><use href="#addnote" x="29.2" y="373.2" width="20" height="20"/><use href="#invadj" x="80.6" y="371.4" width="20" height="20"/><use href="#partsusage" x="28.4" y="419.4" width="20" height="19"/><use href="#barcode" x="79" y="419" width="19" height="18"/><use href="#levels" x="28.3" y="468.7" width="20.4" height="20.2"/><use href="#gears" x="166.3" y="140.1" width="23" height="21"/><use href="#doc" x="273.2" y="139.8" width="16" height="19.4"/><use href="#go2" x="353.5" y="135.9" width="21" height="21"/><use href="#envelope" x="398.2" y="139" width="21.4" height="15.7"/><use href="#globe" x="450.6" y="137.4" width="17.8" height="17.8"/><use href="#clip" x="160.6" y="241" width="16" height="18"/><use href="#clipreview" x="218.4" y="241" width="18" height="19"/><use href="#clipcheck" x="277.3" y="241" width="16" height="18"/><use href="#win" x="157.9" y="326.2" width="19.6" height="19.4"/><use href="#wincheck" x="219.8" y="326.2" width="19.6" height="19.4"/><use href="#cliphelp" x="155.8" y="415.4" width="19" height="20"/><use href="#parts" x="356.9" y="239" width="16.1" height="15.6"/><use href="#persons" x="399.6" y="237.6" width="20" height="17.4"/><use href="#ordering" x="362.8" y="308" width="21" height="19"/><use href="#orderplus" x="424.9" y="307.8" width="22" height="21"/><use href="#barcode" x="365" y="361" width="19" height="18"/><use href="#levels" x="425.9" y="359.4" width="20.8" height="20.2"/><rect x="505" y="70.4" width="54.6" height="17.2" fill="none" stroke="#E2171E" stroke-width="2.5"/><path d="M547.6 102.8 L566.8 139.6" stroke="#E2171E" stroke-width="2.6"/><path d="M542.9 95.6 L554.8 103.6 L543.2 110.4 Z" fill="#E2171E"/></svg>
</body></html>
